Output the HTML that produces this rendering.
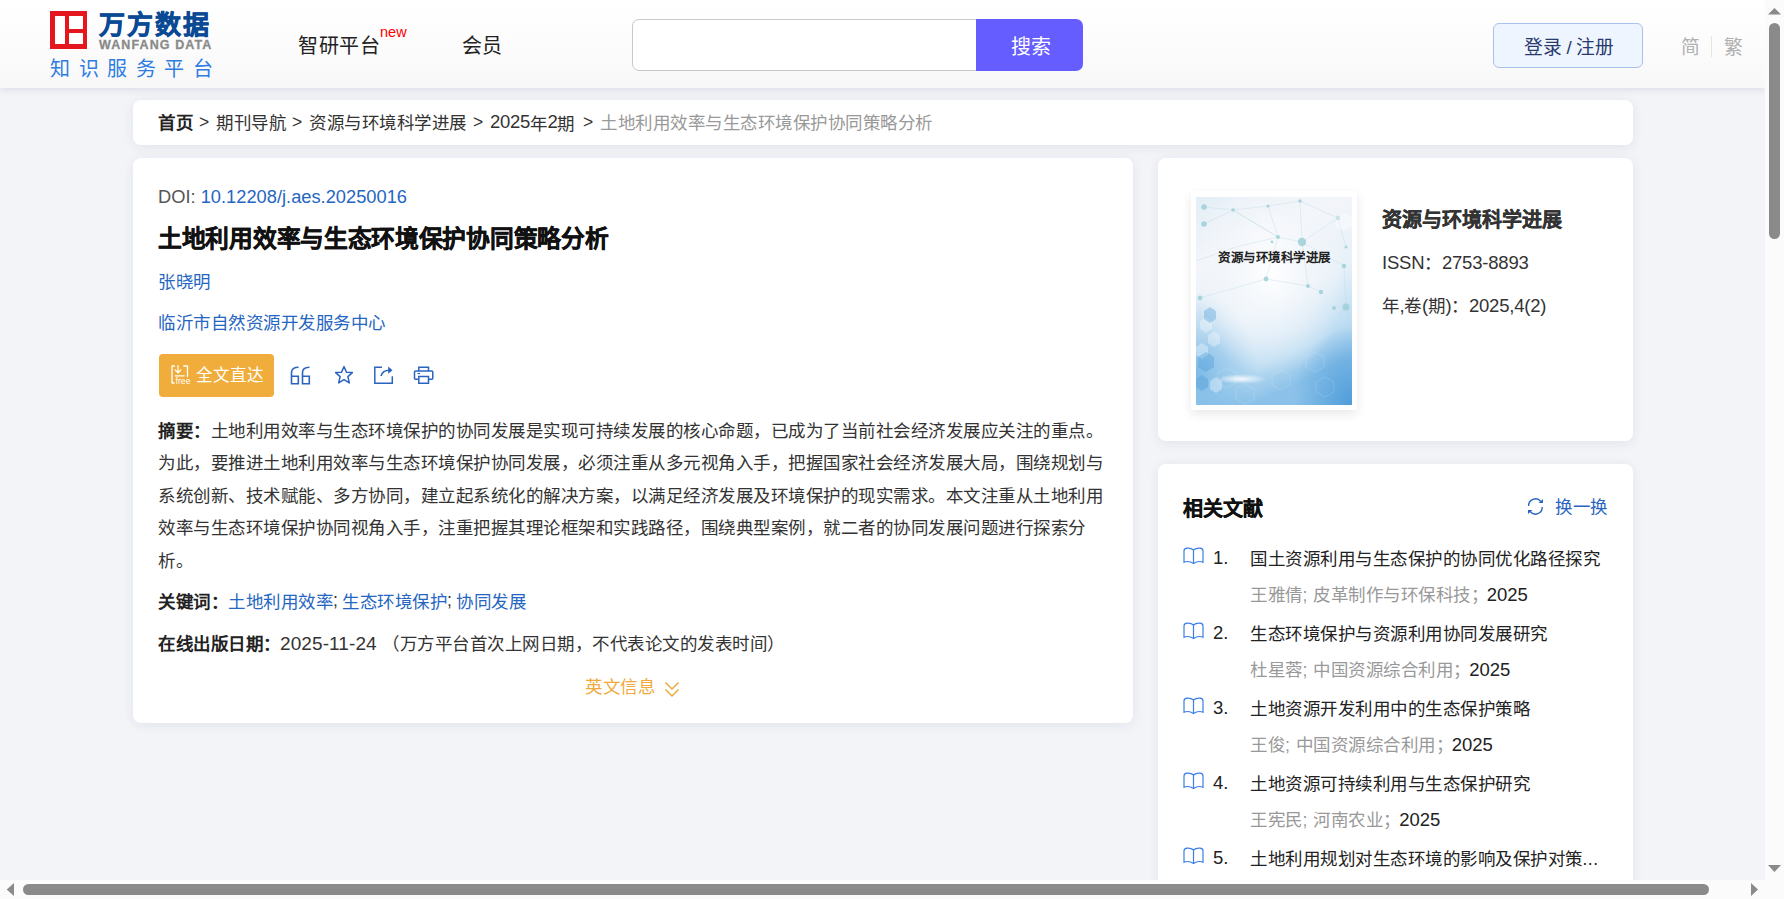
<!DOCTYPE html>
<html lang="zh-CN"><head><meta charset="utf-8">
<style>
*{margin:0;padding:0;box-sizing:border-box}
html,body{width:1784px;height:899px;overflow:hidden}
body{font-family:"Liberation Sans",sans-serif;background:#fafafa;position:relative;color:#333}
.abs{position:absolute}
#page{position:absolute;left:0;top:0;width:1765px;height:880px;overflow:hidden;background:#f2f4f8}
#hdr{position:absolute;left:0;top:0;width:1765px;height:88px;background:linear-gradient(#ffffff 0%,#fcfcfc 50%,#f8f8f9 100%);box-shadow:0 2px 7px rgba(40,50,80,.11)}
.t{position:absolute;white-space:nowrap;line-height:1}
.c{font-size:17.5px;letter-spacing:0.5px}
.card{position:absolute;background:#fff;border-radius:8px;box-shadow:0 2px 12px rgba(30,40,70,.08)}
.blue{color:#2566c2}
.bs{-webkit-text-stroke:0.3px currentColor}
#vs{position:absolute;left:1765px;top:0;width:19px;height:880px;background:#fbfbfb}
#hs{position:absolute;left:0;top:880px;width:1784px;height:19px;background:#fbfbfb}
</style></head><body>
<div id="page">
<div id="hdr">
  <div class="abs" style="left:50px;top:11px;width:37px;height:38px;background:#e4161e"></div>
  <div class="abs" style="left:55px;top:16px;width:10px;height:28px;background:#fff"></div>
  <div class="abs" style="left:69px;top:16px;width:14px;height:12.5px;background:#fff"></div>
  <div class="abs" style="left:69px;top:33px;width:14px;height:11px;background:#fff"></div>
  <div class="t" style="left:99px;top:12px;font-size:26px;font-weight:bold;color:#0a4a94;letter-spacing:2px;-webkit-text-stroke:0.6px #0a4a94">万方数据</div>
  <div class="t" style="left:99px;top:39px;font-size:12.5px;font-weight:bold;color:#8a8a8a;letter-spacing:1.1px;-webkit-text-stroke:0.3px #8a8a8a">WANFANG DATA</div>
  <div class="t" style="left:50px;top:59px;font-size:20px;color:#2f7de1;letter-spacing:8.5px">知识服务平台</div>
  <div class="t" style="left:298px;top:36px;font-size:20px;letter-spacing:0.6px;color:#222">智研平台</div>
  <div class="t" style="left:380px;top:25px;font-size:14.5px;color:#f00">new</div>
  <div class="t" style="left:462px;top:36px;font-size:20px;color:#222">会员</div>
  <div class="abs" style="left:632px;top:19px;width:350px;height:52px;border:1px solid #c8c8c8;border-radius:7px 0 0 7px;background:#fff"></div>
  <div class="abs" style="left:976px;top:19px;width:107px;height:52px;background:#655dff;border-radius:0 7px 7px 0"></div>
  <div class="t" style="left:1011px;top:37px;font-size:20px;color:#fff">搜索</div>
  <div class="abs" style="left:1493px;top:23px;width:150px;height:45px;border:1px solid #a8c2ec;border-radius:6px;background:#eef5ff"></div>
  <div class="t" style="left:1524px;top:39px;font-size:18.75px;letter-spacing:-0.25px;color:#2a3a70">登录 / 注册</div>
  <div class="t" style="left:1681px;top:39px;font-size:18.75px;color:#b0b0b0">简</div>
  <div class="abs" style="left:1711px;top:36px;width:1px;height:21px;background:#e4e4e4"></div>
  <div class="t" style="left:1724px;top:39px;font-size:18.75px;color:#b0b0b0">繁</div>
</div>
<div class="card" style="left:133px;top:100px;width:1500px;height:45px"></div>
<div class="t c" style="left:158px;top:115px;color:#222;font-weight:bold">首页</div>
<div class="t" style="left:199px;top:114px;font-size:17.5px;color:#333">&gt;</div>
<div class="t c" style="left:216px;top:115px;color:#333">期刊导航</div>
<div class="t" style="left:292px;top:114px;font-size:17.5px;color:#333">&gt;</div>
<div class="t c" style="left:309px;top:115px;color:#333">资源与环境科学进展</div>
<div class="t" style="left:473px;top:114px;font-size:17.5px;color:#333">&gt;</div>
<div class="t" style="left:490px;top:113px;font-size:18.5px;letter-spacing:-0.3px;color:#333">2025<span class="c" style="position:relative;top:2px">年</span>2<span class="c" style="position:relative;top:2px">期</span></div>
<div class="t" style="left:583px;top:114px;font-size:17.5px;color:#333">&gt;</div>
<div class="t c" style="left:600px;top:115px;color:#999">土地利用效率与生态环境保护协同策略分析</div>
<div class="card" style="left:133px;top:158px;width:1000px;height:565px"></div>
<div class="t" style="left:158px;top:188px;font-size:18.3px;color:#555">DOI: <span class="blue">10.12208/j.aes.20250016</span></div>
<div class="t" style="left:158px;top:227px;font-size:23.75px;letter-spacing:-0.3px;font-weight:bold;color:#111;-webkit-text-stroke:0.4px #111">土地利用效率与生态环境保护协同策略分析</div>
<div class="t c blue" style="left:158px;top:274px">张晓明</div>
<div class="t c blue" style="left:158px;top:315px">临沂市自然资源开发服务中心</div>
<div class="abs" style="left:159px;top:354px;width:115px;height:43px;background:#f0ad3b;border-radius:4px"></div>
<svg class="abs" style="left:160px;top:355px" width="40" height="40" viewBox="160 355 40 40">
  <path d="M174.5 366H172V383H174" fill="none" stroke="#fff" stroke-width="1.3" stroke-linejoin="round" stroke-linecap="round"/>
  <path d="M183.8 366H187.5V376.5" fill="none" stroke="#fff" stroke-width="1.3" stroke-linejoin="round" stroke-linecap="round"/>
  <path d="M178 365.5V372.5M175.2 370L178 372.8L180.8 370" fill="none" stroke="#fff" stroke-width="1.2" stroke-linecap="round"/>
  <path d="M175.3 375.8H184.2" fill="none" stroke="#fff" stroke-width="1.2" stroke-linecap="round"/>
  <text x="175.5" y="384" font-family="Liberation Sans" font-size="8.7" fill="#fff">free</text>
</svg>
<div class="t" style="left:196px;top:367px;font-size:16.5px;color:#fff">全文直达</div>
<svg class="abs" style="left:290px;top:366px" width="21" height="19" viewBox="0 0 21 19">
  <path d="M8.5 1.2C4 1.2 1.5 3 1.5 6.5V17.8H8.3V10.2H1.5" fill="none" stroke="#2a64c0" stroke-width="1.6"/>
  <path d="M19.5 1.2C15 1.2 12.5 3 12.5 6.5V17.8H19.3V10.2H12.5" fill="none" stroke="#2a64c0" stroke-width="1.6"/>
</svg>
<svg class="abs" style="left:334px;top:365px" width="20" height="20" viewBox="0 0 20 20">
  <path d="M10 1.6L12.5 7.2L18.4 7.6L13.9 11.6L15.3 17.9L10 14.6L4.7 17.9L6.1 11.6L1.6 7.6L7.5 7.2Z" fill="none" stroke="#2a64c0" stroke-width="1.5" stroke-linejoin="round"/>
</svg>
<svg class="abs" style="left:373px;top:365px" width="21" height="20" viewBox="0 0 21 20">
  <path d="M9 2.3H1.8V18.3H19.3V11.3" fill="none" stroke="#2a64c0" stroke-width="1.5"/>
  <path d="M8 11C9 7 12 5.2 16.5 5.2" fill="none" stroke="#2a64c0" stroke-width="1.6"/>
  <path d="M15.2 1.5L19.5 5.2L15.2 8.8Z" fill="#2a64c0"/>
</svg>
<svg class="abs" style="left:413px;top:365px" width="21" height="20" viewBox="0 0 21 20">
  <path d="M5.8 6V2.3H15.5V6" fill="none" stroke="#2a64c0" stroke-width="1.5"/>
  <path d="M5 14.3H2.5C1.8 14.3 1.5 14 1.5 13.3V7C1.5 6.3 1.8 6 2.5 6H18.8C19.5 6 19.8 6.3 19.8 7V13.3C19.8 14 19.5 14.3 18.8 14.3H16" fill="none" stroke="#2a64c0" stroke-width="1.5"/>
  <path d="M5.8 11.5H15.5V18.3H5.8Z" fill="none" stroke="#2a64c0" stroke-width="1.5"/>
  <path d="M4.5 8.5H7" stroke="#2a64c0" stroke-width="1.2"/>
</svg>
<div class="t c" style="left:158px;line-height:32.4px;color:#333;top:415px"><b style="color:#222">摘要：</b>土地利用效率与生态环境保护的协同发展是实现可持续发展的核心命题，已成为了当前社会经济发展应关注的重点。<br>为此，要推进土地利用效率与生态环境保护协同发展，必须注重从多元视角入手，把握国家社会经济发展大局，围绕规划与<br>系统创新、技术赋能、多方协同，建立起系统化的解决方案，以满足经济发展及环境保护的现实需求。本文注重从土地利用<br>效率与生态环境保护协同视角入手，注重把握其理论框架和实践路径，围绕典型案例，就二者的协同发展问题进行探索分<br>析。</div>
<div class="t c" style="left:158px;top:594px;color:#222;font-weight:bold">关键词：</div>
<div class="t c blue" style="left:228px;top:594px">土地利用效率</div>
<div class="t blue" style="left:333px;top:592px;font-size:17.5px;color:#333">;</div>
<div class="t c blue" style="left:342px;top:594px">生态环境保护</div>
<div class="t blue" style="left:447px;top:592px;font-size:17.5px;color:#333">;</div>
<div class="t c blue" style="left:456px;top:594px">协同发展</div>
<div class="t c" style="left:158px;top:636px;color:#222;font-weight:bold">在线出版日期：</div>
<div class="t" style="left:280px;top:634px;font-size:19px;letter-spacing:0.1px;color:#333">2025-11-24</div>
<div class="t c" style="left:382px;top:636px;color:#333">（万方平台首次上网日期，不代表论文的发表时间）</div>
<div class="t c" style="left:585px;top:679px;color:#f0a93b">英文信息</div>
<svg class="abs" style="left:664px;top:681px" width="16" height="17" viewBox="0 0 16 17">
  <path d="M1.5 1.5L8 8L14.5 1.5M1.5 8.5L8 15L14.5 8.5" fill="none" stroke="#f0a93b" stroke-width="1.5"/>
</svg>
<div class="card" style="left:1158px;top:158px;width:475px;height:283px"></div>
<div class="card" style="left:1158px;top:464px;width:475px;height:500px"></div>
<div class="abs" style="left:1191px;top:191px;width:166px;height:219px;background:#fff;box-shadow:0 4px 10px rgba(0,0,0,.09)"></div>
<div class="abs" style="left:1196px;top:197px;width:156px;height:208px;overflow:hidden;background:#eaf2f9">
  <svg width="156" height="208" viewBox="0 0 156 208" style="position:absolute;left:0;top:0">
    <defs>
      <linearGradient id="g1" x1="0" y1="0" x2="0.35" y2="1">
        <stop offset="0" stop-color="#e3eef6"/><stop offset="0.3" stop-color="#f3f5fa"/><stop offset="0.6" stop-color="#e6f0f8"/><stop offset="0.85" stop-color="#bcdcf2"/><stop offset="1" stop-color="#8cc2e9"/>
      </linearGradient>
      <radialGradient id="g2" cx="0.48" cy="0.36" r="0.5">
        <stop offset="0" stop-color="#ffffff" stop-opacity="0.95"/><stop offset="0.6" stop-color="#f4f7fb" stop-opacity="0.6"/><stop offset="1" stop-color="#f4f7fb" stop-opacity="0"/>
      </radialGradient>
      <radialGradient id="g3" cx="1" cy="1" r="0.38">
        <stop offset="0" stop-color="#3f93d6" stop-opacity="0.8"/><stop offset="1" stop-color="#3f93d6" stop-opacity="0"/>
      </radialGradient>
      <radialGradient id="g4" cx="0" cy="0.85" r="0.4">
        <stop offset="0" stop-color="#5aa8e0" stop-opacity="0.7"/><stop offset="1" stop-color="#5aa8e0" stop-opacity="0"/>
      </radialGradient>
      <radialGradient id="g5" cx="0.4" cy="0.5" r="0.5">
        <stop offset="0" stop-color="#fff" stop-opacity="1"/><stop offset="1" stop-color="#fff" stop-opacity="0"/>
      </radialGradient>
    </defs>
    <rect width="156" height="208" fill="url(#g1)"/>
    <rect width="156" height="208" fill="url(#g4)"/>
    <rect width="156" height="208" fill="url(#g3)"/>
    <rect width="156" height="208" fill="url(#g2)"/>
    <g stroke="#b2d8e0" stroke-width="0.55" fill="none" opacity="0.6">
      <path d="M8 10L37 13L72 9L104 4L142 21M8 27L37 13L82 40L106 45L142 21M37 13L82 40L70 82L4 101M72 9L82 40M104 4L106 45L112 89L125 95M106 45L148 69L150 110L142 118M142 21L150 50M70 82L112 89M0 64L40 50L82 40M150 110L155 140"/>
    </g>
    <g fill="#9fd0d9" opacity="0.85">
      <circle cx="8" cy="10" r="2.8"/><circle cx="37" cy="13" r="1.8"/><circle cx="8" cy="27" r="2.8"/><circle cx="82" cy="40" r="2"/><circle cx="104" cy="4" r="1.8"/><circle cx="142" cy="21" r="2.2"/><circle cx="106" cy="45" r="4.2"/><circle cx="76" cy="45" r="1.4"/><circle cx="70" cy="82" r="2.4"/><circle cx="112" cy="89" r="2"/><circle cx="125" cy="95" r="2.2"/><circle cx="4" cy="101" r="2.4"/><circle cx="150" cy="110" r="3.5"/><circle cx="148" cy="69" r="2.2"/><circle cx="138" cy="111" r="2"/><circle cx="72" cy="9" r="1.6"/><circle cx="150" cy="50" r="1.5"/>
    </g>
    <g fill="#ffffff" opacity="0.35">
      <polygon points="4,124 10,120 16,124 16,132 10,136 4,132"/>
      <polygon points="12,138 18,134 24,138 24,146 18,150 12,146"/>
      <polygon points="0,150 6,146 12,150 12,158 6,162 0,158"/>
      <polygon points="14,184 20,180 26,184 26,192 20,196 14,192"/>
      <polygon points="140,20 148,16 156,20 156,30 148,34 140,30"/>
    </g>
    <g fill="#4a9ad8" opacity="0.35">
      <polygon points="2,160 10,155 18,160 18,170 10,175 2,170"/>
      <polygon points="0,182 6,178 12,182 12,190 6,194 0,190"/>
      <polygon points="8,114 14,110 20,114 20,122 14,126 8,122"/>
    </g>
    <g fill="none" stroke="#ffffff" stroke-width="0.5" opacity="0.3">
      <polygon points="22,176 31,171 40,176 40,186 31,191 22,186"/>
      <polygon points="76,178 85,173 94,178 94,188 85,193 76,188"/>
      <polygon points="110,160 119,155 128,160 128,170 119,175 110,170"/>
      <polygon points="120,185 129,180 138,185 138,195 129,200 120,195"/>
      <polygon points="40,192 49,187 58,192 58,202 49,207 40,202"/>
    </g>
    <ellipse cx="50" cy="182" rx="26" ry="5" fill="url(#g5)" opacity="0.9"/>
  </svg>
  <div class="t" style="left:22px;top:55px;font-size:12.5px;letter-spacing:-0.5px;font-weight:bold;color:#222">资源与环境科学进展</div>
</div>
<div class="t bs" style="left:1382px;top:210px;font-size:20px;font-weight:bold;color:#333">资源与环境科学进展</div>
<div class="t" style="left:1382px;top:254px;font-size:18.5px;letter-spacing:-0.2px;color:#333">ISSN<span class="c">：</span>2753-8893</div>
<div class="t" style="left:1382px;top:297px;font-size:18.5px;letter-spacing:-0.2px;color:#333"><span class="c">年</span>,<span class="c">卷</span>(<span class="c">期</span>)<span class="c">：</span>2025,4(2)</div>
<div class="t bs" style="left:1183px;top:499px;font-size:20px;font-weight:bold;color:#111">相关文献</div>
<svg class="abs" style="left:1526px;top:497px" width="19" height="19" viewBox="0 0 19 19">
  <path d="M2.6 9A6.8 6.8 0 0 1 14.8 4.6M16.2 10A6.8 6.8 0 0 1 4 14.4" fill="none" stroke="#2a64c0" stroke-width="1.4"/>
  <path d="M12.6 6L17 6L17 2Z" fill="#2a64c0"/><path d="M6.4 13L2 13L2 17Z" fill="#2a64c0"/>
</svg>
<div class="t c" style="left:1555px;top:499px;color:#2a64c0">换一换</div>
<svg class="abs" style="left:1183px;top:547px" width="21" height="18" viewBox="0 0 21 18"><path d="M10.5 16.5V3C8.8 1.5 6.5 1 4 1.2C2 1.4 1 2.3 1 4V15.3C4 14 7.5 14.5 10.5 16.5C13.5 14.5 17 14 20 15.3V4C20 2.3 19 1.4 17 1.2C14.5 1 12.2 1.5 10.5 3" fill="none" stroke="#3b7fe6" stroke-width="1.2"/></svg>
<div class="t" style="left:1213px;top:549px;font-size:18.5px;color:#222">1.</div>
<div class="t c" style="left:1250px;top:551px;color:#222">国土资源利用与生态保护的协同优化路径探究</div>
<div class="t c" style="left:1250px;top:586px;color:#999">王雅倩; 皮革制作与环保科技；<span style="color:#222;font-size:18.5px;letter-spacing:0;margin-left:-1.5px">2025</span></div>
<svg class="abs" style="left:1183px;top:622px" width="21" height="18" viewBox="0 0 21 18"><path d="M10.5 16.5V3C8.8 1.5 6.5 1 4 1.2C2 1.4 1 2.3 1 4V15.3C4 14 7.5 14.5 10.5 16.5C13.5 14.5 17 14 20 15.3V4C20 2.3 19 1.4 17 1.2C14.5 1 12.2 1.5 10.5 3" fill="none" stroke="#3b7fe6" stroke-width="1.2"/></svg>
<div class="t" style="left:1213px;top:624px;font-size:18.5px;color:#222">2.</div>
<div class="t c" style="left:1250px;top:626px;color:#222">生态环境保护与资源利用协同发展研究</div>
<div class="t c" style="left:1250px;top:661px;color:#999">杜星蓉; 中国资源综合利用；<span style="color:#222;font-size:18.5px;letter-spacing:0;margin-left:-1.5px">2025</span></div>
<svg class="abs" style="left:1183px;top:697px" width="21" height="18" viewBox="0 0 21 18"><path d="M10.5 16.5V3C8.8 1.5 6.5 1 4 1.2C2 1.4 1 2.3 1 4V15.3C4 14 7.5 14.5 10.5 16.5C13.5 14.5 17 14 20 15.3V4C20 2.3 19 1.4 17 1.2C14.5 1 12.2 1.5 10.5 3" fill="none" stroke="#3b7fe6" stroke-width="1.2"/></svg>
<div class="t" style="left:1213px;top:699px;font-size:18.5px;color:#222">3.</div>
<div class="t c" style="left:1250px;top:701px;color:#222">土地资源开发利用中的生态保护策略</div>
<div class="t c" style="left:1250px;top:736px;color:#999">王俊; 中国资源综合利用；<span style="color:#222;font-size:18.5px;letter-spacing:0;margin-left:-1.5px">2025</span></div>
<svg class="abs" style="left:1183px;top:772px" width="21" height="18" viewBox="0 0 21 18"><path d="M10.5 16.5V3C8.8 1.5 6.5 1 4 1.2C2 1.4 1 2.3 1 4V15.3C4 14 7.5 14.5 10.5 16.5C13.5 14.5 17 14 20 15.3V4C20 2.3 19 1.4 17 1.2C14.5 1 12.2 1.5 10.5 3" fill="none" stroke="#3b7fe6" stroke-width="1.2"/></svg>
<div class="t" style="left:1213px;top:774px;font-size:18.5px;color:#222">4.</div>
<div class="t c" style="left:1250px;top:776px;color:#222">土地资源可持续利用与生态保护研究</div>
<div class="t c" style="left:1250px;top:811px;color:#999">王宪民; 河南农业；<span style="color:#222;font-size:18.5px;letter-spacing:0;margin-left:-1.5px">2025</span></div>
<svg class="abs" style="left:1183px;top:847px" width="21" height="18" viewBox="0 0 21 18"><path d="M10.5 16.5V3C8.8 1.5 6.5 1 4 1.2C2 1.4 1 2.3 1 4V15.3C4 14 7.5 14.5 10.5 16.5C13.5 14.5 17 14 20 15.3V4C20 2.3 19 1.4 17 1.2C14.5 1 12.2 1.5 10.5 3" fill="none" stroke="#3b7fe6" stroke-width="1.2"/></svg>
<div class="t" style="left:1213px;top:849px;font-size:18.5px;color:#222">5.</div>
<div class="t c" style="left:1250px;top:851px;color:#222">土地利用规划对生态环境的影响及保护对策...</div>

</div>
<div id="vs">
  <svg class="abs" style="left:0;top:0" width="19" height="880" viewBox="0 0 19 880">
    <path d="M3 14.5L9.5 8L16 14.5Z" fill="#8a8a8a"/>
    <rect x="4" y="23" width="11" height="216" rx="5.5" fill="#8a8a8a"/>
    <path d="M3 865L16 865L9.5 872Z" fill="#8a8a8a"/>
  </svg>
</div>
<div id="hs">
  <svg class="abs" style="left:0;top:0" width="1784" height="19" viewBox="0 0 1784 19">
    <path d="M14 3L6.7 9.5L14 16Z" fill="#8a8a8a"/>
    <rect x="23" y="4" width="1686" height="11" rx="5.5" fill="#8a8a8a"/>
    <path d="M1751 3L1758 9.5L1751 16Z" fill="#8a8a8a"/>
  </svg>
</div>
</body></html>
